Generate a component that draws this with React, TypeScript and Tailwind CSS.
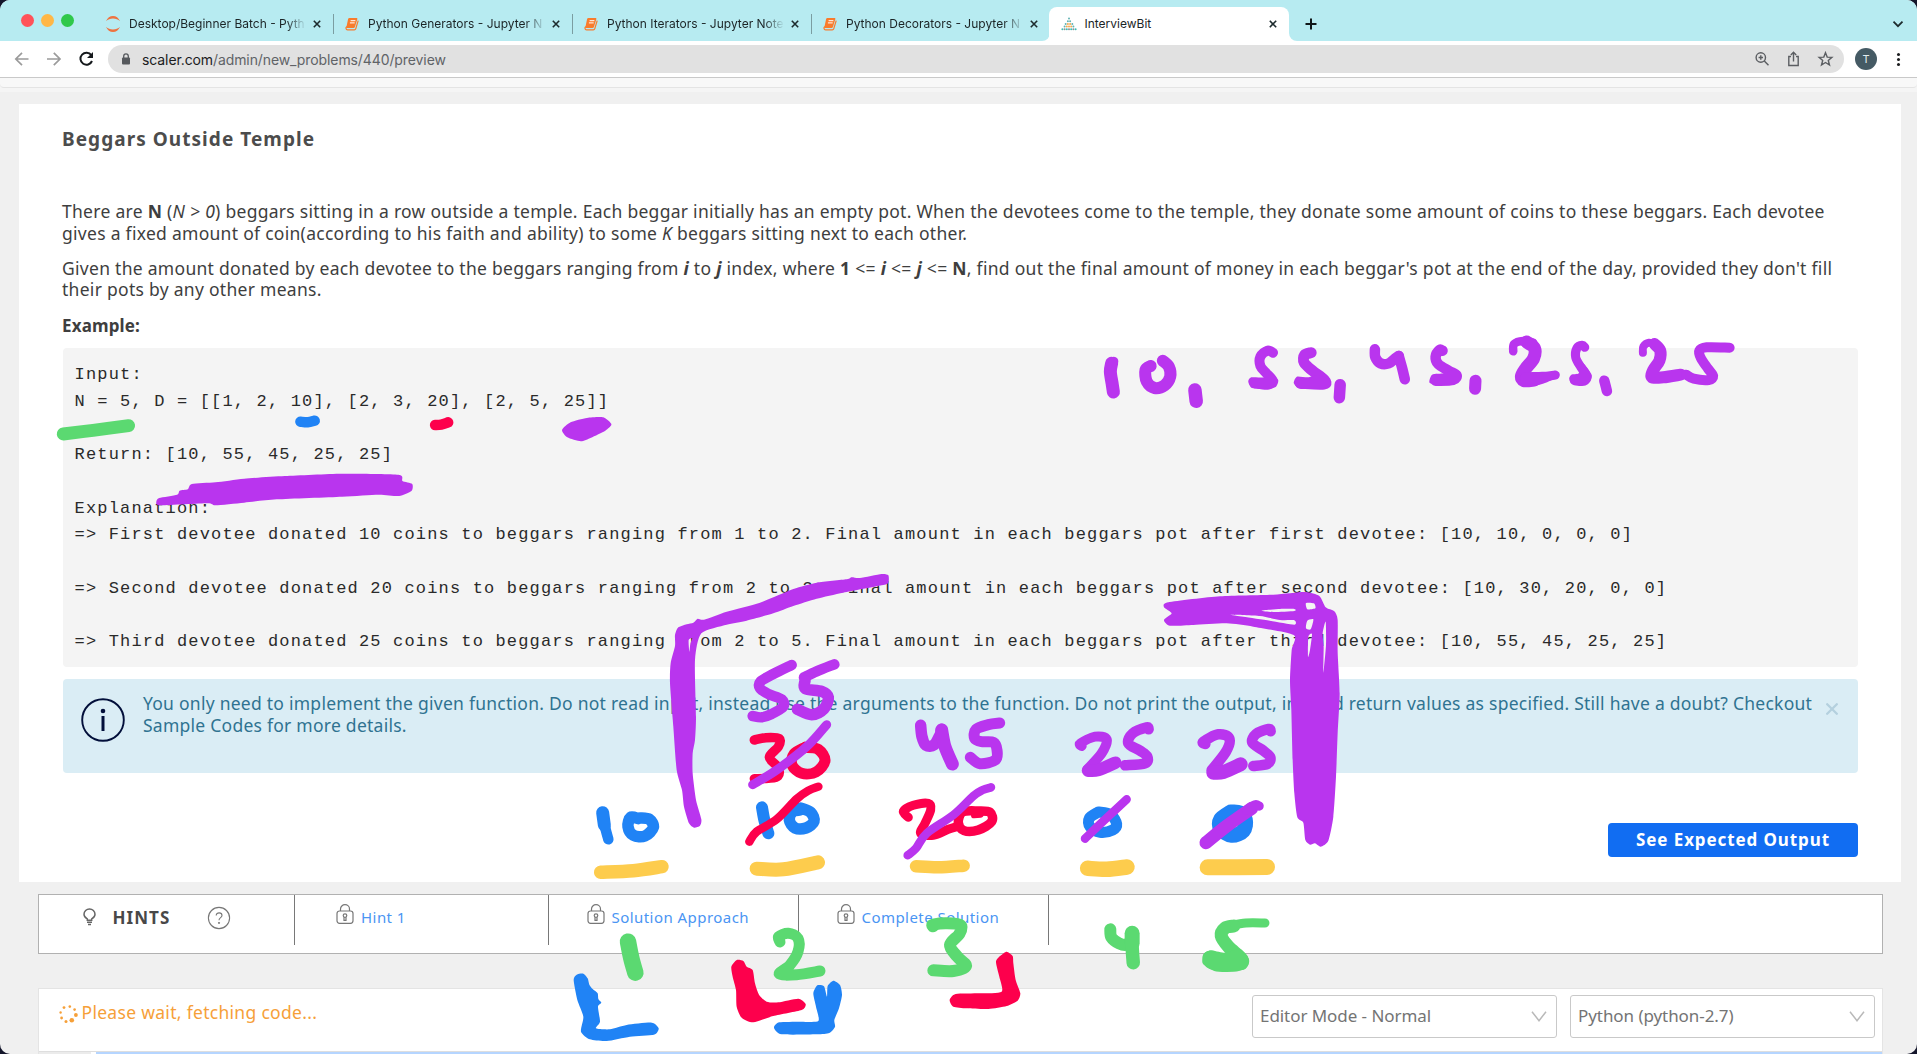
import type { ReactNode } from "react";

type Pt = [number, number];

const GREEN = "#5bd971";
const BLUE = "#2083f5";
const RED = "#fd004c";
const PURPLE = "#b935ee";
const YELLOW = "#fdcc4d";

/** Smooth curve through the points (Catmull-Rom converted to cubic Béziers). */
function curve(points: Pt[], closed = false, tension = 6): string {
  const n = points.length;
  const at = (i: number): Pt =>
    closed ? points[(i + n) % n] : points[Math.max(0, Math.min(n - 1, i))];
  let d = `M${points[0][0]} ${points[0][1]}`;
  const segments = closed ? n : n - 1;
  for (let i = 0; i < segments; i++) {
    const [p0, p1, p2, p3] = [at(i - 1), at(i), at(i + 1), at(i + 2)];
    d += `C${p1[0] + (p2[0] - p0[0]) / tension} ${p1[1] + (p2[1] - p0[1]) / tension} ${
      p2[0] - (p3[0] - p1[0]) / tension
    } ${p2[1] - (p3[1] - p1[1]) / tension} ${p2[0]} ${p2[1]}`;
  }
  return closed ? d + "Z" : d;
}

function Stroke({ c, w, p }: { c: string; w: number; p: Pt[] }) {
  return (
    <path
      d={curve(p)}
      fill="none"
      stroke={c}
      strokeWidth={w}
      strokeLinecap="round"
      strokeLinejoin="round"
      vectorEffect="non-scaling-stroke"
    />
  );
}

function Blob({ c, p, holes = [] }: { c: string; p: Pt[]; holes?: Pt[][] }) {
  return (
    <path
      d={[p, ...holes].map((ring) => curve(ring, true, 9)).join("")}
      fill={c}
      fillRule="evenodd"
    />
  );
}

function Annotations() {
  return (
    <svg
      className="pointer-events-none absolute inset-0"
      width="1917"
      height="1054"
      viewBox="0 0 1917 1054"
    >
      {/* answer list, top right */}
      <g transform="translate(1080 320) scale(.43367 .33333)">
        <Stroke c={PURPLE} w={13} p={[[73, 130], [70, 155], [74, 190], [77, 216]]} />
        <Stroke c={PURPLE} w={9} p={[[78, 124], [72, 140]]} />
        <Stroke c={PURPLE} w={12} p={[[163, 138], [151, 150], [154, 185], [172, 204], [195, 196], [208, 170], [205, 140], [191, 122]]} />
        <Stroke c={PURPLE} w={13.5} p={[[265, 210], [268, 244]]} />
        <Stroke c={PURPLE} w={10} p={[[445, 98], [432, 92], [416, 110], [416, 138], [430, 160], [444, 182], [432, 194], [402, 189]]} />
        <Blob c={PURPLE} p={[[395, 172], [428, 172], [440, 160], [457, 180], [452, 200], [432, 207], [397, 204], [388, 185]]} />
        <Stroke c={PURPLE} w={11} p={[[533, 98], [518, 105], [517, 128], [536, 152], [562, 178], [562, 192], [508, 190]]} />
        <Blob c={PURPLE} p={[[500, 170], [525, 172], [550, 165], [575, 180], [572, 202], [510, 207], [493, 190]]} />
        <Stroke c={PURPLE} w={11.5} p={[[600, 194], [598, 233]]} />
        <Stroke c={PURPLE} w={10.5} p={[[680, 88], [681, 112], [693, 130], [712, 130], [728, 114], [735, 108]]} />
        <Stroke c={PURPLE} w={10.5} p={[[735, 108], [743, 145], [749, 178]]} />
        <Stroke c={PURPLE} w={10.5} p={[[836, 92], [829, 90], [820, 110], [826, 132], [850, 152], [868, 165], [860, 180], [820, 182]]} />
        <Blob c={PURPLE} p={[[812, 164], [840, 160], [862, 150], [880, 165], [870, 187], [830, 195], [806, 188]]} />
        <Stroke c={PURPLE} w={12} p={[[912, 182], [911, 206]]} />
        <Stroke c={PURPLE} w={8.5} p={[[999, 94], [1001, 72], [1022, 63], [1045, 68]]} />
        <Stroke c={PURPLE} w={13} p={[[1030, 66], [1048, 85], [1046, 115], [1028, 145], [1018, 168], [1024, 182], [1048, 180]]} />
        <Stroke c={PURPLE} w={9} p={[[1024, 175], [1060, 172], [1096, 165]]} />
        <Blob c={PURPLE} p={[[1020, 160], [1075, 155], [1105, 158], [1092, 178], [1060, 194], [1020, 195]]} />
        <Stroke c={PURPLE} w={9} p={[[1164, 82], [1158, 76], [1146, 84], [1143, 112], [1155, 142], [1168, 168], [1162, 184], [1140, 182]]} />
        <Blob c={PURPLE} p={[[1133, 164], [1150, 160], [1160, 130], [1180, 165], [1175, 187], [1155, 196], [1132, 188], [1128, 175]]} />
        <Stroke c={PURPLE} w={10.5} p={[[1209, 182], [1215, 213]]} />
        <Stroke c={PURPLE} w={8} p={[[1298, 98], [1299, 80], [1312, 68], [1330, 74]]} />
        <Stroke c={PURPLE} w={12} p={[[1325, 72], [1338, 92], [1336, 122], [1322, 150], [1319, 172], [1345, 172], [1385, 164]]} />
        <Stroke c={PURPLE} w={10} p={[[1498, 83], [1445, 82], [1428, 92], [1432, 115], [1448, 146], [1460, 168], [1450, 180], [1415, 176], [1398, 164]]} />
      </g>

      {/* underlines in the code block */}
      <g transform="translate(40 180) scale(.40816 .33333)">
        <Stroke c={GREEN} w={13} p={[[57, 762], [130, 751], [217, 737]]} />
        <Stroke c={BLUE} w={10.5} p={[[638, 725], [656, 727], [673, 722]]} />
        <Stroke c={RED} w={10.5} p={[[968, 735], [983, 734], [1000, 727]]} />
        <Blob c={PURPLE} p={[[1279, 750], [1300, 727], [1340, 714], [1380, 712], [1400, 733], [1385, 752], [1350, 773], [1325, 784], [1292, 772]]} />
        <Blob c={PURPLE} p={[[285, 966], [292, 954], [336, 944], [342, 932], [362, 928], [372, 912], [430, 907], [500, 896], [600, 888], [740, 881], [878, 884], [888, 903], [912, 912], [910, 933], [880, 948], [830, 944], [740, 950], [580, 958], [500, 968], [430, 976], [410, 970], [295, 976]]} />
      </g>

      {/* left bracket and first working columns */}
      <g transform="translate(560 560) scale(.33333)">
        <Blob
          c={PURPLE}
          p={[[345, 225], [354, 203], [380, 193], [400, 188], [413, 176], [432, 179], [500, 155], [600, 128], [700, 87], [770, 68], [860, 58], [875, 52], [900, 54], [965, 42], [985, 46], [985, 68], [965, 76], [850, 98], [770, 116], [700, 138], [640, 160], [560, 182], [500, 194], [424, 220], [405, 300], [408, 470], [405, 540], [398, 580], [398, 640], [408, 720], [424, 778], [420, 797], [402, 803], [387, 790], [372, 740], [366, 690], [350, 630], [340, 500], [330, 370], [332, 310], [345, 258]]}
          holes={[[[386, 240], [397, 234], [391, 252], [388, 275]]]}
        />
        <Stroke c={RED} w={9.5} p={[[583, 540], [618, 533], [658, 536], [655, 560], [628, 592], [654, 622], [654, 648], [625, 655], [583, 656]]} />
        <Stroke c={RED} w={11} p={[[735, 562], [702, 582], [696, 615], [725, 640], [768, 636], [795, 602], [775, 568], [735, 562]]} />
        <Stroke c={PURPLE} w={9} p={[[578, 674], [650, 630], [740, 560], [800, 494]]} />
        <Stroke c={PURPLE} w={10.5} p={[[695, 315], [640, 342], [602, 364], [600, 385], [625, 402], [665, 418], [670, 440], [635, 462], [605, 472], [578, 468]]} />
        <Stroke c={PURPLE} w={10.5} p={[[823, 313], [770, 334], [732, 352]]} />
        <Stroke c={PURPLE} w={11.5} p={[[735, 362], [736, 386], [785, 394], [805, 412], [792, 446], [755, 464], [712, 448]]} />

        <Stroke c={BLUE} w={13} p={[[128, 758], [133, 795]]} />
        <Stroke c={BLUE} w={10.5} p={[[128, 758], [135, 800], [145, 838]]} />
        <Stroke c={BLUE} w={11.5} p={[[235, 776], [212, 772], [204, 800], [220, 826], [255, 828], [280, 802], [268, 778], [240, 774]]} />
        <Stroke c={BLUE} w={12} p={[[606, 742], [613, 780], [625, 820]]} />
        <Stroke c={BLUE} w={11.5} p={[[720, 750], [698, 755], [688, 780], [705, 804], [738, 804], [762, 784], [752, 757], [722, 744]]} />
        <Stroke c={RED} w={8.5} p={[[568, 845], [590, 815], [650, 778], [710, 717], [745, 692], [775, 680]]} />

        <Stroke c={PURPLE} w={11.5} p={[[1082, 496], [1086, 530], [1098, 556], [1122, 555], [1140, 525], [1146, 508]]} />
        <Stroke c={PURPLE} w={13} p={[[1145, 510], [1155, 560], [1177, 612]]} />
        <Stroke c={RED} w={9} p={[[1045, 772], [1030, 754], [1060, 736], [1105, 730], [1112, 750], [1095, 790], [1082, 820], [1120, 826], [1165, 808], [1190, 800]]} />
        <Stroke c={RED} w={9.5} p={[[1255, 753], [1208, 756], [1195, 788], [1212, 812], [1255, 810], [1295, 785], [1290, 757], [1255, 753]]} />
        <Stroke c={RED} w={6} p={[[1242, 766], [1262, 764]]} />
        <Stroke c={PURPLE} w={8.5} p={[[1043, 886], [1068, 865], [1100, 820], [1180, 765], [1240, 708], [1268, 690], [1293, 682]]} />

        <Stroke c={YELLOW} w={13.5} p={[[122, 937], [220, 932], [306, 920]]} />
        <Stroke c={YELLOW} w={14} p={[[590, 926], [670, 928], [774, 907]]} />
        <Stroke c={YELLOW} w={12.5} p={[[1068, 919], [1135, 922], [1211, 917]]} />
      </g>

      {/* right working columns and bracket */}
      <g transform="translate(960 560) scale(.33333)">
        <Stroke c={PURPLE} w={11} p={[[119, 489], [85, 494], [48, 508], [44, 535], [65, 545], [100, 547], [111, 570], [106, 600], [60, 611], [31, 592]]} />
        <Stroke c={PURPLE} w={10} p={[[365, 558], [362, 550], [405, 530], [440, 538], [425, 580], [382, 628]]} />
        <Stroke c={PURPLE} w={12.5} p={[[384, 632], [415, 630], [466, 608]]} />
        <Stroke c={PURPLE} w={10.5} p={[[566, 508], [560, 502], [518, 520], [505, 550], [540, 572], [562, 590], [555, 610], [495, 616]]} />
        <Stroke c={PURPLE} w={10.5} p={[[736, 552], [730, 545], [775, 523], [808, 535], [798, 575], [755, 630]]} />
        <Stroke c={PURPLE} w={14} p={[[760, 638], [790, 636], [842, 613]]} />
        <Stroke c={PURPLE} w={10.5} p={[[932, 514], [926, 507], [888, 522], [877, 548], [910, 572], [931, 592], [922, 612], [880, 618]]} />
        <Stroke c={BLUE} w={11} p={[[415, 756], [388, 775], [390, 800], [420, 817], [458, 810], [470, 792], [452, 764], [415, 756]]} />
        <Stroke c={PURPLE} w={8.5} p={[[375, 836], [425, 788], [500, 718]]} />
        <Stroke c={BLUE} w={15} p={[[812, 756], [782, 778], [782, 806], [815, 826], [850, 812], [856, 780], [838, 758], [812, 756]]} />
        <Stroke c={PURPLE} w={13} p={[[738, 848], [800, 798], [875, 745]]} />
        <Stroke c={PURPLE} w={9.5} p={[[860, 750], [885, 735], [897, 738]]} />
        <Stroke c={YELLOW} w={15.5} p={[[383, 925], [440, 928], [501, 921]]} />
        <Stroke c={YELLOW} w={16} p={[[743, 922], [921, 921]]} />
        <Blob
          c={PURPLE}
          p={[[612, 142], [625, 127], [780, 109], [940, 104], [1035, 96], [1078, 108], [1097, 142], [1123, 154], [1133, 180], [1133, 275], [1139, 400], [1133, 520], [1128, 650], [1120, 770], [1105, 842], [1082, 860], [1065, 850], [1050, 854], [1036, 840], [1030, 788], [1012, 772], [1003, 700], [998, 600], [994, 450], [990, 360], [995, 270], [1001, 225], [880, 200], [800, 190], [700, 195], [630, 197], [612, 180], [635, 160]]}
          holes={[
            [[905, 152], [960, 147], [1003, 147], [1003, 153], [940, 156]],
            [[810, 164], [900, 168], [960, 180], [1003, 181], [1003, 194], [930, 182], [850, 170]],
            [[1038, 129], [1062, 130], [1066, 145], [1042, 148]],
            [[1042, 182], [1060, 178], [1052, 208], [1038, 205]],
            [[1097, 185], [1098, 255], [1090, 340], [1091, 260], [1088, 220]],
            [[1056, 222], [1050, 270], [1044, 290], [1045, 230]],
          ]}
        />
      </g>

      {/* column numbers and index brackets */}
      <g transform="translate(540 860) scale(.33333)">
        <Stroke c={GREEN} w={16.5} p={[[264, 245], [274, 295], [286, 338]]} />
        <Stroke c={GREEN} w={11} p={[[720, 246], [716, 230], [745, 220], [774, 235], [774, 275], [750, 315], [718, 342], [770, 344], [840, 333]]} />
        <Stroke c={GREEN} w={12} p={[[1179, 199], [1180, 194], [1220, 190], [1262, 196], [1258, 222], [1230, 255], [1252, 290], [1278, 318], [1240, 333], [1180, 331]]} />
        <Blob c={BLUE} p={[[101, 360], [110, 344], [130, 341], [143, 355], [148, 374], [158, 387], [173, 400], [175, 417], [184, 428], [174, 440], [180, 485], [168, 505], [210, 508], [260, 495], [335, 488], [356, 505], [342, 524], [270, 530], [200, 543], [150, 538], [123, 515], [130, 470], [112, 420]]} />
        <Blob c={RED} p={[[574, 320], [590, 300], [610, 303], [620, 320], [638, 330], [645, 370], [657, 404], [680, 425], [715, 427], [775, 416], [797, 432], [785, 450], [700, 468], [640, 487], [605, 473], [590, 440], [588, 390], [578, 350]]} />
        <Blob c={BLUE} p={[[820, 400], [832, 376], [852, 379], [861, 410], [863, 378], [880, 362], [900, 375], [906, 405], [897, 445], [883, 480], [885, 500], [868, 519], [830, 523], [725, 523], [702, 503], [718, 487], [780, 485], [835, 483], [828, 440]]} />
        <Blob c={RED} p={[[1368, 305], [1383, 286], [1400, 275], [1418, 288], [1420, 310], [1427, 360], [1441, 400], [1433, 422], [1400, 438], [1345, 447], [1280, 445], [1240, 440], [1229, 420], [1247, 402], [1320, 400], [1385, 395], [1378, 350]]} />
      </g>
      <g transform="translate(1060 800) scale(.54656 .33333)">
        <Stroke c={GREEN} w={12} p={[[92, 388], [94, 412], [108, 430], [122, 434], [132, 415]]} />
        <Stroke c={GREEN} w={15} p={[[132, 400], [132, 430]]} />
        <Stroke c={GREEN} w={13.5} p={[[132, 400], [132, 440], [134, 488]]} />
        <Stroke c={GREEN} w={9} p={[[375, 369], [340, 369], [308, 378]]} />
        <Stroke c={GREEN} w={13} p={[[318, 378], [302, 384], [295, 408], [308, 440], [333, 478], [325, 494], [285, 494], [273, 472]]} />
        <Blob c={GREEN} p={[[262, 465], [275, 451], [300, 458], [330, 448], [346, 480], [338, 508], [305, 513], [275, 508], [261, 490]]} />
      </g>
    </svg>
  );
}

function CloseX() {
  return (
    <svg width="8" height="8" viewBox="0 0 8 8" className="shrink-0">
      <path d="M.8.8l6.400 6.400M7.200.8L.8 7.200" stroke="#1d2b2e" strokeWidth="1.600" />
    </svg>
  );
}

function JupyterIcon() {
  return (
    <svg width="16" height="18" viewBox="0 0 16 18" className="shrink-0">
      <path d="M1 6.200C2.400 2.700 5 1 8 1s5.600 1.700 7 5.200C13.200 4.400 10.800 3.500 8 3.500S2.800 4.400 1 6.200z" fill="#ee7340" />
      <path d="M1 11.800C2.400 15.300 5 17 8 17s5.600-1.700 7-5.200c-1.800 1.800-4.200 2.700-7 2.700s-5.200-.9-7-2.700z" fill="#ee7340" />
    </svg>
  );
}

function BookIcon() {
  return (
    <svg width="14" height="14" viewBox="0 0 14 14" className="shrink-0">
      <path d="M4.400 1h6.900c.9 0 1.300.5 1 1.300L9.900 9.900c-.2.700-.7 1-1.400 1H1.200L3.100 2.100C3.300 1.400 3.700 1 4.400 1z" fill="#f97b2c" />
      <path d="M2.700 9.500c-1.300 0-1.900.8-1.700 1.900.1.900.7 1.400 1.600 1.400h6.700c.8 0 1.300-.4 1.500-1.100l2.400-8" fill="none" stroke="#f97b2c" strokeWidth="1.200" />
      <path d="M5.600 3.700h4.800M4.900 5.900h4.800" stroke="#fff" strokeWidth="1" />
    </svg>
  );
}

function InterviewBitIcon() {
  const rows = [1, 2, 4, 5, 7];
  return (
    <svg width="16" height="14" viewBox="0 0 16 14" className="shrink-0">
      {rows.map((count, r) =>
        Array.from({ length: count }, (_, i) => (
          <circle
            key={`${r}-${i}`}
            cx={8 + (i - (count - 1) / 2) * 2.2}
            cy={1.5 + r * 2.700}
            r="1"
            fill={
              r === 4
                ? i % 2
                  ? "#8c9497"
                  : "#3dbdb5"
                : r < 2 || i === 0 || i === count - 1
                  ? "#62b3b4"
                  : "#f5a94f"
            }
          />
        )),
      )}
    </svg>
  );
}

function Tab({ icon, title, divider = true }: { icon: ReactNode; title: string; divider?: boolean }) {
  return (
    <div className={divider ? "flex h-full w-[239px] items-center" : "flex h-full w-[220px] items-center"}>
      <div className="flex w-4 justify-center">{icon}</div>
      <div className="ml-[8.500px] w-[179px] whitespace-nowrap [mask-image:linear-gradient(to_right,#000_88%,transparent_99%)]">
        {title}
      </div>
      <div className="ml-[2.500px] flex w-3 justify-center">
        <CloseX />
      </div>
      {divider && <div className="ml-[10px] h-5 w-px bg-[#7b9da1]" />}
    </div>
  );
}

function BrowserChrome() {
  return (
    <header className="shrink-0 font-['Inter',sans-serif]">
      <div className="flex h-[41px] bg-[#b7ebf1] pl-[20.500px] text-[12px] text-[#1b2426]">
        <div className="flex h-10 w-[84px] items-center gap-[7px]">
          <i className="size-[13px] rounded-full bg-[#ff5259]" />
          <i className="size-[13px] rounded-full bg-[#ffb746]" />
          <i className="size-[13px] rounded-full bg-[#2fc84b]" />
        </div>
        <div className="flex h-[41px] pt-[7px]">
          <Tab icon={<JupyterIcon />} title="Desktop/Beginner Batch - Pyth" />
          <Tab icon={<BookIcon />} title="Python Generators - Jupyter N" />
          <Tab icon={<BookIcon />} title="Python Iterators - Jupyter Note" />
          <Tab icon={<BookIcon />} title="Python Decorators - Jupyter N" divider={false} />
        </div>
        <div className="mt-[7px] h-[34px] w-2 bg-white">
          <div className="h-full w-full rounded-br-lg bg-[#b7ebf1]" />
        </div>
        <div className="-ml-px mt-[7px] flex h-[34px] w-[240px] items-center rounded-t-lg bg-white pl-3">
          <InterviewBitIcon />
          <span className="ml-2 flex-1">InterviewBit</span>
          <div className="mr-3">
            <CloseX />
          </div>
        </div>
        <div className="mt-[7px] h-[34px] w-2 bg-white">
          <div className="h-full w-full rounded-bl-lg bg-[#b7ebf1]" />
        </div>
        <svg width="12" height="12" viewBox="0 0 12 12" className="ml-2 mt-[18px]">
          <path d="M6 .5v11M.5 6h11" stroke="#101719" strokeWidth="2" />
        </svg>
        <svg width="12" height="8" viewBox="0 0 12 8" className="ml-auto mr-[13px] mt-5">
          <path d="M1.500 1.700L6 6.200l4.500-4.500" fill="none" stroke="#1d2b2e" strokeWidth="1.800" />
        </svg>
      </div>

      <div className="flex h-9 items-center bg-white">
        <svg width="94" height="20" viewBox="0 0 94 20" className="ml-[10px] mr-1 shrink-0" fill="none">
          <g stroke="#9b9b9b" strokeWidth="1.700">
            <path d="M18.500 10H6M12 3.800L5.800 10l6.200 6.200" />
            <path d="M37 10h12.800M43.800 3.800L50 10l-6.200 6.200" />
          </g>
          <path d="M81.300 6.200A6 6 0 1 0 82 12" stroke="#15191c" strokeWidth="2" />
          <path d="M83 3v6h-6z" fill="#15191c" />
        </svg>
        <div className="flex h-7 w-[1736px] items-center rounded-full bg-[#e1e1e1] pr-[10px] pl-[13px] text-[14px] tracking-[-0.1px] text-[#606367]">
          <svg width="10" height="12" viewBox="0 0 10 12">
            <rect x="1" y="4.500" width="8" height="7" rx="1" fill="#56595d" />
            <path d="M2.700 5V3.200a2.300 2.300 0 0 1 4.600 0V5" fill="none" stroke="#56595d" strokeWidth="1.300" />
          </svg>
          <span className="ml-[11px] flex-1">
            <span className="text-[#1b1c1e]">scaler.com</span>/admin/new_problems/440/preview
          </span>
          <svg width="80" height="18" viewBox="0 0 80 18" fill="none" stroke="#5b5e62" strokeWidth="1.400">
            <circle cx="6.800" cy="7.500" r="4.700" />
            <path d="M10.300 11l4.200 4.300M6.800 5.300v4.400M4.600 7.500H9" />
            <path d="M37 6.500h-2.200v9h9.400v-9H42M39.500 11.500v-9M36.800 5l2.700-2.700L42.200 5" />
            <path d="M71.500 2.700l1.700 4.400 4.700.3-3.600 3 1.200 4.600-4-2.500-4 2.500 1.200-4.600-3.600-3 4.700-.3z" />
          </svg>
        </div>
        <div className="ml-[11px] flex size-[22px] items-center justify-center rounded-full bg-[#455a64] text-[11px] text-[#e3ecef]">
          T
        </div>
        <div className="ml-[20px] flex flex-col gap-[2px]">
          <i className="size-[3px] rounded-full bg-[#1b1c1e]" />
          <i className="size-[3px] rounded-full bg-[#1b1c1e]" />
          <i className="size-[3px] rounded-full bg-[#1b1c1e]" />
        </div>
      </div>
      <div className="h-[15px] bg-[#f5f5f5]">
        <div className="h-[11px] rounded-b-[4px] border-t border-b border-t-[#c9c9c9] border-b-[#e4e4e4] bg-[#f8f8f8]" />
      </div>
    </header>
  );
}

const CODE = `Input:
N = 5, D = [[1, 2, 10], [2, 3, 20], [2, 5, 25]]

Return: [10, 55, 45, 25, 25]

Explanation:
=> First devotee donated 10 coins to beggars ranging from 1 to 2. Final amount in each beggars pot after first devotee: [10, 10, 0, 0, 0]

=> Second devotee donated 20 coins to beggars ranging from 2 to 3. Final amount in each beggars pot after second devotee: [10, 30, 20, 0, 0]

=> Third devotee donated 25 coins to beggars ranging from 2 to 5. Final amount in each beggars pot after third devotee: [10, 55, 45, 25, 25]`;

function Problem() {
  return (
    <section className="mr-4 ml-[19px] h-[778px] shrink-0 bg-white pt-[23px] pr-[43px] pl-11">
      <h1 className="-ml-px h-6 text-[19px] leading-6 font-bold tracking-[1.050px] text-[#4c4c4c]">
        Beggars Outside Temple
      </h1>

      <div className="mt-[50.200px] -ml-px text-[17.500px] leading-[21.600px] whitespace-nowrap text-[#3e3e3e]">
        <p className="tracking-[0.282px]">
          There are <b>N</b> (<i>N &gt; 0</i>) beggars sitting in a row outside a temple. Each beggar initially has an
          empty pot. When the devotees come to the temple, they donate some amount of coins to these beggars. Each
          devotee
          <br />
          gives a fixed amount of coin(according to his faith and ability) to some <i>K</i> beggars sitting next to each
          other.
        </p>
        <p className="mt-[13.500px] tracking-[0.284px]">
          Given the amount donated by each devotee to the beggars ranging from{" "}
          <b>
            <i>i</i>
          </b>{" "}
          to{" "}
          <b>
            <i>j</i>
          </b>{" "}
          index, where <b>1</b> &lt;={" "}
          <b>
            <i>i</i>
          </b>{" "}
          &lt;={" "}
          <b>
            <i>j</i>
          </b>{" "}
          &lt;= <b>N</b>, find out the final amount of money in each beggar's pot at the end of the day, provided they
          don't fill
          <br />
          their pots by any other means.
        </p>
        <p className="mt-[13.500px] text-[17px] font-bold tracking-[0.140px]">Example:</p>
      </div>

      <pre className="mt-[12px] h-[319px] rounded bg-[#f4f4f4] pt-[14px] pl-[11.500px] font-['Liberation_Mono',monospace] text-[17px] leading-[26.700px] tracking-[1.175px] text-[#2a2a2a]">
        {CODE}
      </pre>

      <div className="mt-3 flex h-[94px] rounded bg-[#daedf5] text-[17.500px] leading-[21.600px] whitespace-nowrap text-[#2f7391]">
        <svg width="44" height="44" viewBox="0 0 44 44" className="mt-[18.500px] ml-[18px] shrink-0">
          <circle cx="22" cy="22" r="20.800" fill="none" stroke="#020f3a" strokeWidth="1.900" />
          <circle cx="22" cy="13" r="2.300" fill="#020f3a" />
          <path d="M22 18v15" stroke="#020f3a" strokeWidth="3" />
        </svg>
        <p className="mt-[14px] ml-[18px] tracking-[0.252px]">
          You only need to implement the given function. Do not read input, instead use the arguments to the function. Do
          not print the output, instead return values as specified. Still have a doubt? Checkout
          <br />
          Sample Codes for more details.
        </p>
        <svg width="12" height="12" viewBox="0 0 12 12" className="mt-6 ml-auto mr-5 shrink-0">
          <path d="M1.200 1.200l9.600 9.600M10.800 1.200l-9.600 9.600" stroke="#b4d0de" strokeWidth="2.300" strokeLinecap="round" />
        </svg>
      </div>

      <div className="mt-[50px] flex justify-end">
        <button className="h-[34px] w-[250px] rounded bg-[#116df2] text-[17px] font-bold tracking-[0.900px] text-white">
          See Expected Output
        </button>
      </div>
    </section>
  );
}

function LockIcon() {
  return (
    <svg width="18" height="20" viewBox="0 0 18 20" fill="none" stroke="#777" strokeWidth="1.200" className="shrink-0">
      <rect x="1" y="7" width="16" height="12.300" rx="2.500" />
      <path d="M4.500 7V5a4.500 4.300 0 0 1 9 0v2" />
      <circle cx="9" cy="11.600" r="1.800" />
      <path d="M8 13.300v3h2v-3" />
    </svg>
  );
}

function Hint({ label }: { label: string }) {
  return (
    <>
      <LockIcon />
      <span className="ml-[7px] text-[15px] tracking-[0.450px] text-[#4a95f3]">{label}</span>
    </>
  );
}

function Hints() {
  return (
    <section className="mt-3 mr-[34px] ml-[38px] flex h-[60px] shrink-0 border border-[#b1b1b1] bg-white">
      <div className="flex h-[50px] w-[256px] border-r border-[#787878] pl-[43.500px]">
        <svg width="13" height="18" viewBox="0 0 13 18" fill="none" stroke="#666" strokeWidth="1.500" className="mt-[12.500px]">
          <path d="M4.300 12.200v-1.300C2.300 9.800 1 8.500 1 6.200a5.500 5.300 0 0 1 11 0c0 2.300-1.300 3.600-3.300 4.700v1.300z" />
          <path d="M4 14.300h5M5 16.600h3" />
        </svg>
        <span className="mt-[10px] ml-[17px] text-[17px] leading-[25px] font-bold tracking-[1.050px] text-[#484848]">
          HINTS
        </span>
        <svg width="24" height="24" viewBox="0 0 24 24" fill="none" stroke="#777" className="mt-[11px] ml-[36.500px]">
          <circle cx="12" cy="12" r="10.600" strokeWidth="1.100" />
          <path d="M9.200 9.500c0-3.500 5.800-3.400 5.800 0 0 2.200-3 2.200-3 4.800" strokeWidth="1.100" />
          <circle cx="12" cy="16.900" r=".6" fill="#777" />
        </svg>
      </div>
      <div className="flex h-[50px] w-[254px] border-r border-[#787878] pt-[9px] pl-[41px] leading-[20px] [&>span]:mt-[3px]">
        <Hint label="Hint 1" />
      </div>
      <div className="flex h-[50px] w-[250px] border-r border-[#787878] pt-[9px] pl-[37.500px] leading-[20px] [&>span]:mt-[3px]">
        <Hint label="Solution Approach" />
      </div>
      <div className="flex h-[50px] w-[250px] border-r border-[#787878] pt-[9px] pl-[37.500px] leading-[20px] [&>span]:mt-[3px]">
        <Hint label="Complete Solution" />
      </div>
    </section>
  );
}

function Select({ label }: { label: string }) {
  return (
    <div className="flex h-[43px] w-[305px] items-center rounded-[3px] border border-[#c9c9c9] bg-white pr-[9px] pb-px pl-[7px] text-[17px] text-[#747474]">
      <span className="flex-1 tracking-[-0.060px]">{label}</span>
      <svg width="16" height="11" viewBox="0 0 16 11">
        <path d="M1 .7l7 9 7-9" fill="none" stroke="#b9b9b9" strokeWidth="1.500" />
      </svg>
    </div>
  );
}

function Editor() {
  const dots = [
    [16.9, 10, 1.9], [12.8, 15.3, 2.3], [7, 16.5, 1.5], [2.6, 13, 1.4], [1.6, 7.5, 1.2], [5, 2.6, 1.4], [10.8, 1.6, 1.3], [15.6, 4.6, 1.3],
  ];
  return (
    <section className="mt-[34px] mr-[34px] ml-[38px] flex-1 overflow-hidden border-x border-t border-[#e4e4e4] bg-white">
      <div className="flex h-[63px] border-b border-[#dedede]">
        <svg width="19" height="19" viewBox="0 0 19 19" fill="#f6a039" className="mt-4 ml-5">
          {dots.map(([x, y, r], i) => (
            <circle key={i} cx={x} cy={y} r={r} />
          ))}
        </svg>
        <span className="mt-[11px] ml-[3.500px] flex-1 text-[17.500px] leading-6 tracking-[0.300px] text-[#f6a039]">
          Please wait, fetching code...
        </span>
        <div className="mt-[6px] mr-[7px] flex gap-[13px]">
          <Select label="Editor Mode - Normal" />
          <Select label="Python (python-2.7)" />
        </div>
      </div>
      <div className="flex h-2">
        <div className="w-[52px] bg-[#ebebeb]" />
        <div className="ml-[5px] flex-1 bg-[#b5d5ff]" />
      </div>
    </section>
  );
}

export default function App() {
  return (
    <div className="h-[1054px] w-[1917px] overflow-hidden bg-[#14162b]">
      <div className="relative flex h-full flex-col overflow-hidden rounded-[10px] bg-[#f0f0f0] font-['Noto_Sans',sans-serif]">
        <BrowserChrome />
        <div className="h-3 shrink-0" />
        <Problem />
        <Hints />
        <Editor />
        <Annotations />
      </div>
    </div>
  );
}
